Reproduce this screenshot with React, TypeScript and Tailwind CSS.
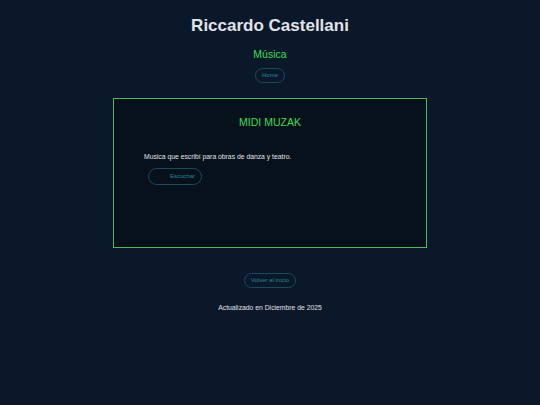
export default function App() {
  return (
    <div className="min-h-screen w-full bg-[#0b1829] text-[#e6e6e6] font-['Liberation_Sans',Arial,sans-serif]">
      <div className="flex flex-col items-center pt-[16px]">
        <h1 className="text-[17px] leading-[20px] font-bold text-[#e0e3e8]">Riccardo Castellani</h1>
        <h2 className="mt-[12px] text-[10.5px] leading-[13px] text-[#3ddc5a]">Música</h2>
        <a className="mt-[7px] px-[6px] h-[15px] leading-[13px] text-[6px] text-[#1d8a9a] border border-[#1b4a5a] rounded-full">
          Home
        </a>

        <div className="mt-[15px] w-[314px] h-[150px] border-[1.5px] border-[#4cb85c] bg-[#07111b] px-[30px]">
          <h3 className="mt-[17px] text-center text-[10.5px] leading-[13px] text-[#3ddc5a]">MIDI MUZAK</h3>
          <p className="mt-[23px] text-[6.8px] leading-[9px] text-[#e0e3e8]">
            Musica que escribí para obras de danza y teatro.
          </p>
          <button className="mt-[5px] ml-[4px] h-[17px] w-[54px] pl-[21px] text-left text-[6px] text-[#1d8a9a] border border-[#1b4a5a] rounded-full">
            Escuchar
          </button>
        </div>

        <a className="mt-[25px] px-[6px] h-[15px] leading-[13px] text-[6px] text-[#1d8a9a] border border-[#1b4a5a] rounded-full">
          Volver al inicio
        </a>
        <p className="mt-[15px] text-[6.8px] leading-[9px] text-[#e0e3e8]">Actualizado en Diciembre de 2025</p>
      </div>
    </div>
  );
}
